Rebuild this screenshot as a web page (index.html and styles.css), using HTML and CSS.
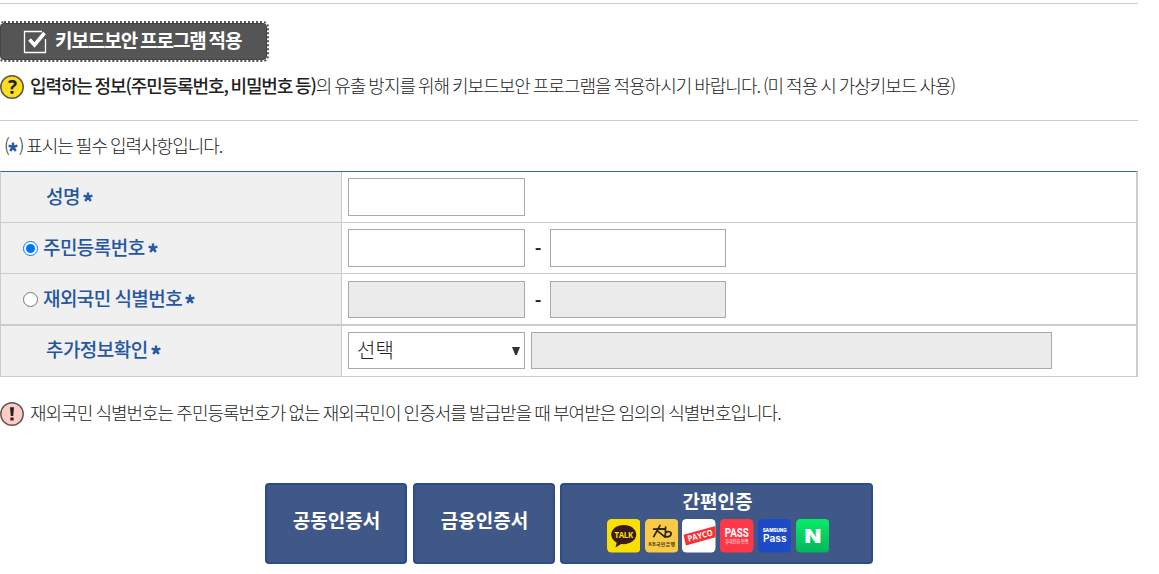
FILE: index.html
```html
<!DOCTYPE html>
<html lang="ko">
<head>
  <meta charset="UTF-8">
  <meta name="viewport" content="width=device-width, initial-scale=1.0">
  <title>본인인증</title>
  <link rel="stylesheet" href="styles.css">
</head>
<body>
  <svg class="defs" width="0" height="0">
    <symbol id="star" viewBox="0 0 10 10">
      <path d="M5 5V0.4M5 5L0.6 3.7M5 5L9.4 3.7M5 5L2.2 9M5 5L7.8 9" stroke="#2a5aa5" stroke-width="2.4" fill="none" />
    </symbol>
  </svg>
  <main>
    <section class="security">
      <button type="button" class="btn-security">
        <svg class="check" width="24" height="24" viewBox="0 0 24 24" fill="none">
          <path d="M19 1.5H1.5V22.5H22.5V9" stroke="#fff" stroke-width="1.3" />
          <path d="M6.5 9.5L11.5 15L21.5 3" stroke="#fff" stroke-width="3.6" />
        </svg>
        <span>키보드보안 프로그램 적용</span>
      </button>
      <p class="info">
        <svg width="24" height="24" viewBox="0 0 24 24">
          <circle cx="12" cy="12" r="11.2" fill="#fddc22" stroke="#5d5540" stroke-width="1.5" />
          <text x="12" y="18.8" text-anchor="middle" class="mark">?</text>
        </svg>
        <span><strong>입력하는 정보(주민등록번호, 비밀번호 등)</strong>의 유출 방지를 위해 키보드보안 프로그램을 적용하시기 바랍니다. (미 적용 시 가상키보드 사용)</span>
      </p>
    </section>

    <p class="required">(<svg class="star"><use href="#star" /></svg>) 표시는 필수 입력사항입니다.</p>

    <form>
      <table class="form-table">
        <tr>
          <th><div class="label indent">성명<svg class="star"><use href="#star" /></svg></div></th>
          <td><div class="fields"><input type="text" class="short"></div></td>
        </tr>
        <tr>
          <th>
            <label class="label"><input type="radio" name="kind" checked>주민등록번호<svg class="star"><use href="#star" /></svg></label>
          </th>
          <td>
            <div class="fields"><input type="text" class="short"><span class="dash">-</span><input type="text" class="short second"></div>
          </td>
        </tr>
        <tr class="thick">
          <th>
            <label class="label"><input type="radio" name="kind">재외국민 식별번호<svg class="star"><use href="#star" /></svg></label>
          </th>
          <td>
            <div class="fields"><input type="text" class="short" disabled><span class="dash">-</span><input type="text" class="short second" disabled></div>
          </td>
        </tr>
        <tr class="extra">
          <th><div class="label indent">추가정보확인<svg class="star"><use href="#star" /></svg></div></th>
          <td>
            <div class="fields">
              <div class="select">
                <span>선택</span>
                <svg width="8" height="8" viewBox="0 0 8 8"><path d="M0 0H8L4.8 8H3.2Z" fill="#333" /></svg>
              </div>
              <input type="text" class="long" disabled>
            </div>
          </td>
        </tr>
      </table>
    </form>

    <p class="info notice">
      <svg width="24" height="24" viewBox="0 0 24 24">
        <circle cx="12" cy="12" r="11.2" fill="#ffcbc5" stroke="#665654" stroke-width="1.5" />
        <path d="M10 5.2H14L13.2 14H10.8ZM10.4 15.6H13.6V18.6H10.4Z" fill="#222" />
      </svg>
      <span>재외국민 식별번호는 주민등록번호가 없는 재외국민이 인증서를 발급받을 때 부여받은 임의의 식별번호입니다.</span>
    </p>

    <div class="buttons">
      <button type="button" class="btn">공동인증서</button>
      <button type="button" class="btn">금융인증서</button>
      <button type="button" class="btn simple">
        <span>간편인증</span>
        <span class="logos">
          <svg viewBox="0 0 34 34">
            <rect width="34" height="34" rx="4.5" fill="#f9e000" />
            <path d="M17 6C9.8 6 4.3 10.2 4.3 15.8C4.3 19.4 6.6 22.3 9.8 24L8.6 29L14.4 25.4C22.8 26.4 29.7 22 29.7 15.8C29.7 10.2 24.2 6 17 6Z" fill="#391b1b" />
            <text x="17" y="19.2" text-anchor="middle" textLength="19" class="talk">TALK</text>
          </svg>
          <svg viewBox="0 0 34 34">
            <rect width="34" height="34" rx="4.5" fill="#f8ca48" />
            <path d="M8 10.2L20 10M15.5 6L8.5 18.5M12 11.5L21 19M21 7.5L20.5 17.5M21 14C23 11.8 27 13 26.5 15.5C26 18.2 22 18.5 20.5 17.5" stroke="#2b2518" stroke-width="1.7" fill="none" />
            <text x="17" y="27.6" text-anchor="middle" textLength="27" class="kb">KB국민은행</text>
          </svg>
          <svg viewBox="0 0 34 34">
            <rect width="34" height="34" rx="4.5" fill="#fff" />
            <path d="M1.5 16L34 7V18.5L4 27Z" fill="#f92f32" />
            <text x="6.6" y="23.2" textLength="26" lengthAdjust="spacingAndGlyphs" transform="rotate(-15 6.6 23.2)" class="payco">PAYCO</text>
          </svg>
          <svg viewBox="0 0 34 34">
            <rect width="34" height="34" rx="4.5" fill="#ff3849" />
            <text x="17" y="18" text-anchor="middle" textLength="24.5" lengthAdjust="spacingAndGlyphs" class="pass">PASS</text>
            <text x="17" y="24.8" text-anchor="middle" textLength="24" lengthAdjust="spacingAndGlyphs" class="pass-sub">휴대전화 인증</text>
          </svg>
          <svg viewBox="0 0 34 34">
            <rect width="34" height="34" rx="4.5" fill="#1d4bc6" />
            <text x="17" y="13.6" text-anchor="middle" textLength="24.5" lengthAdjust="spacingAndGlyphs" class="samsung">SAMSUNG</text>
            <text x="17" y="23.3" text-anchor="middle" textLength="24" lengthAdjust="spacingAndGlyphs" class="samsung-pass">Pass</text>
          </svg>
          <svg viewBox="0 0 34 34">
            <linearGradient id="naver" x2="0" y2="1">
              <stop stop-color="#06ed67" />
              <stop offset="1" stop-color="#06b55c" />
            </linearGradient>
            <rect width="34" height="34" rx="4.5" fill="url(#naver)" />
            <text x="17" y="24" text-anchor="middle" textLength="17" lengthAdjust="spacingAndGlyphs" class="naver">N</text>
          </svg>
        </span>
      </button>
    </div>
  </main>
</body>
</html>
```

FILE: styles.css
```css
* {
  margin: 0;
  padding: 0;
  box-sizing: border-box;
}

body {
  font-family: "Noto Sans CJK KR", sans-serif;
  font-size: 18px;
  font-weight: 300;
  letter-spacing: -1px;
  word-spacing: -1.1px;
  color: #222;
  background-color: #fff;
  overflow: hidden;
}

button,
input {
  font-family: inherit;
}

main {
  width: 1138px;
  padding-top: 3px;
}

.defs {
  display: block;
}

.star {
  width: 10px;
  height: 10px;
}

/* keyboard security */
.security {
  height: 118px;
  padding-top: 19px;
  border-top: 1px solid #ccc;
  border-bottom: 1px solid #ccc;
}

.btn-security {
  display: flex;
  align-items: center;
  width: 267px;
  height: 37px;
  padding-left: 22px;
  border: 1px solid #444;
  border-radius: 4px;
  outline: 2px dotted #555;
  background-color: #555;
  color: #fff;
  font-size: 19px;
  font-weight: 700;
  letter-spacing: -1.05px;
  word-spacing: -1.4px;
}
.btn-security span {
  margin: -4px 0 0 8px;
  white-space: nowrap;
}

.info {
  display: flex;
  align-items: center;
  height: 26px;
  margin-top: 14px;
  white-space: nowrap;
}
.info svg {
  flex-shrink: 0;
  margin-right: 6px;
}
.info strong {
  font-weight: 500;
  letter-spacing: -1.12px;
}
.info span {
  margin-top: -4px;
}

.mark {
  font: 700 19px "Open Sans", sans-serif;
  fill: #222;
}

.required {
  height: 50px;
  padding-left: 4px;
  line-height: 48px;
}
.required .star {
  margin: 0 1px 1px -1px;
}

/* form */
.form-table {
  width: 1138px;
  table-layout: fixed;
  border-collapse: separate;
  border-spacing: 0;
  border-top: 1px solid #3366a5;
  border-left: 1px solid #ccc;
  border-right: 2px solid #ccc;
}
.form-table th,
.form-table td {
  height: 51px;
  border-bottom: 1px solid #ccc;
  vertical-align: top;
}
.form-table th {
  width: 341px;
  border-right: 1px solid #ccc;
  background-color: #f0f0f0;
  text-align: left;
}
.form-table .thick th,
.form-table .thick td {
  height: 52px;
  border-bottom-width: 2px;
}

.label {
  display: flex;
  align-items: center;
  height: 47px;
  padding-left: 22px;
  color: #2556a1;
  font-size: 19px;
  font-weight: 500;
  letter-spacing: -0.55px;
}
.label.indent {
  padding-left: 45px;
}
.extra .label {
  height: 44px;
}
.label .star {
  margin: 3px 0 0 3px;
}
.label input {
  width: 15px;
  height: 15px;
  margin: 3px 5px 0 0;
}

.fields {
  display: flex;
  padding: 6px 0 0 6px;
}
.fields input {
  height: 38px;
  border: 1px solid #a9a9a9;
  background-color: #fff;
}
.fields input:disabled {
  height: 37px;
  background-color: #ebebeb;
}
.thick .fields {
  padding-top: 7px;
}
.fields .short {
  width: 177px;
}
.fields .second {
  width: 176px;
}
.fields .long {
  width: 521px;
}

.dash {
  width: 25px;
  line-height: 38px;
  font-weight: 700;
  text-align: center;
}

.select {
  display: flex;
  align-items: center;
  justify-content: space-between;
  width: 177px;
  height: 37px;
  margin-right: 6px;
  padding: 0 4px 0 8px;
  border: 1px solid #a9a9a9;
  font-size: 20px;
  letter-spacing: 0;
}
.select span {
  margin-top: -3px;
}

.notice {
  margin-top: 24px;
  word-spacing: -0.9px;
}
.notice span {
  margin-top: -5px;
}

/* certificate buttons */
.buttons {
  display: flex;
  margin: 56px 0 0 265px;
}

.btn {
  width: 142px;
  height: 81px;
  margin-right: 6px;
  padding: 0 0 8px 1px;
  border: 2px solid #2b4b89;
  border-radius: 4px;
  background-color: #3f5888;
  color: #fff;
  font-size: 19px;
  font-weight: 700;
}
.btn.simple {
  display: flex;
  flex-direction: column;
  align-items: center;
  width: 313px;
  margin-left: -1px;
  padding: 2px 0 0 2px;
  line-height: 28px;
}

.logos {
  display: flex;
  gap: 4.3px;
  margin: 4px 0 0 1px;
}
.logos svg {
  display: block;
  width: 33.5px;
  height: 33.5px;
}

.logos text {
  letter-spacing: 0;
  word-spacing: 0;
}
.talk {
  font: 700 8px "Open Sans", sans-serif;
  fill: #f9e000;
}
.kb {
  font: 700 5px "Noto Sans CJK KR", sans-serif;
  fill: #4b3d1c;
}
.payco {
  font: 700 8.5px "Open Sans", sans-serif;
  fill: #fff;
}
.pass {
  font: 700 12.5px "Roboto", sans-serif;
  fill: #fff;
}
.pass-sub {
  font: 400 4.5px "Noto Sans CJK KR", sans-serif;
  fill: #fff;
}
.samsung {
  font: 800 5px "Inter", sans-serif;
  fill: #fff;
}
.samsung-pass {
  font: 600 10.5px "Inter", sans-serif;
  fill: #fff;
}
.naver {
  font: 900 19px "Inter", sans-serif;
  fill: #fff;
}
```
